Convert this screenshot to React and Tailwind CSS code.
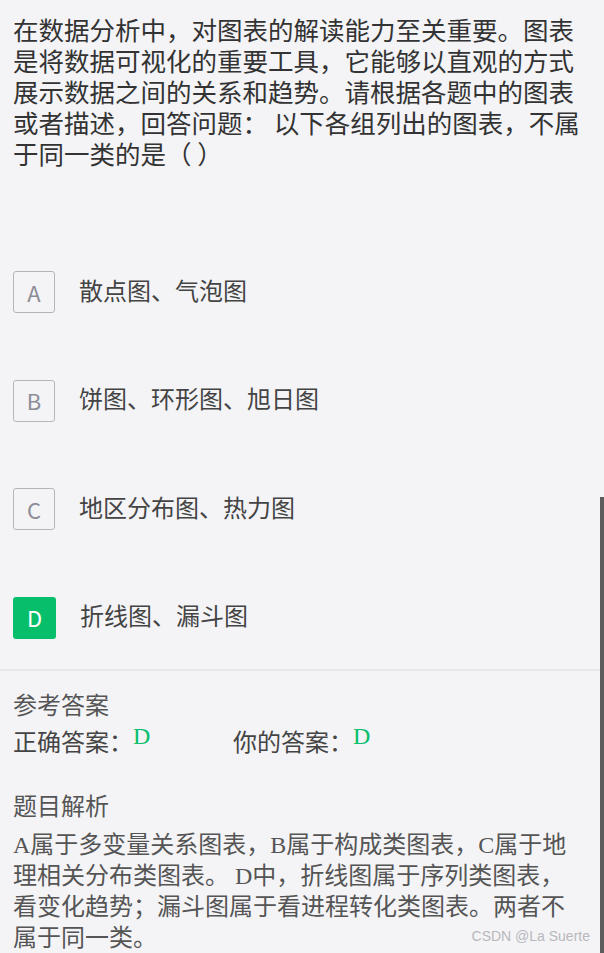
import React from "react";

const options = [
  { key: "A", text: "散点图、气泡图" },
  { key: "B", text: "饼图、环形图、旭日图" },
  { key: "C", text: "地区分布图、热力图" },
  { key: "D", text: "折线图、漏斗图", picked: true },
];

const sans = "font-['Microsoft_YaHei','Noto_Sans_CJK_SC',sans-serif]";

const App = () => {
  return (
    <div className={`relative w-[604px] h-[953px] overflow-hidden bg-[#f4f4f7] ${sans}`}>
      {/* question */}
      <div className="pt-[13px] pl-[13px] w-[583px] text-[25.5px] leading-[31px] text-[#333]">
        在数据分析中，对图表的解读能力至关重要。图表是将数据可视化的重要工具，它能够以直观的方式展示数据之间的关系和趋势。请根据各题中的图表或者描述，回答问题： 以下各组列出的图表，不属于同一类的是（ ）
      </div>

      {/* options */}
      <div className="mt-[103px] flex flex-col gap-[66.5px] pl-[13px]">
        {options.map((o) => (
          <div key={o.key} className="flex items-center h-[42px]">
            {o.picked ? (
              <div className="w-[43px] h-[42px] rounded-[3px] bg-[#07bf6b] text-white flex items-center justify-center text-[22px]">
                {o.key}
              </div>
            ) : (
              <div className="w-[42px] h-[42px] rounded-[3px] border border-[#b4b4bc] text-[#8c8c96] flex items-center justify-center text-[22px]">
                {o.key}
              </div>
            )}
            <div className="ml-[24px] -mt-[5px] text-[24px] text-[#444]">{o.text}</div>
          </div>
        ))}
      </div>

      <div className="mt-[30px] mr-[4px] h-[2px] bg-[#e6e6ec]" />

      {/* answer */}
      <div className="pl-[13px] pt-[17px] text-[24px] leading-[31px]">
        <div className="text-[#555]">参考答案</div>
        <div className="mt-[6px] flex text-[#444]">
          <div className="w-[220px] flex">
            <span>正确答案：</span>
            <span className="font-['Liberation_Serif',serif] text-[#07bf6b] -mt-[4px]">D</span>
          </div>
          <div className="flex">
            <span>你的答案：</span>
            <span className="font-['Liberation_Serif',serif] text-[#07bf6b] -mt-[4px]">D</span>
          </div>
        </div>

        <div className="mt-[33px] text-[#555]">题目解析</div>
        <div className="mt-[10px] w-[570px] leading-[31px] text-[#555] font-['Liberation_Serif','Microsoft_YaHei','Noto_Sans_CJK_SC',serif]">
          A属于多变量关系图表，B属于构成类图表，C属于地理相关分布类图表。 D中，折线图属于序列类图表，看变化趋势；漏斗图属于看进程转化类图表。两者不属于同一类。
        </div>
      </div>

      {/* watermark */}
      <div className="absolute right-[14px] bottom-[6px] text-[14px] text-[#b8b8bc] font-['Liberation_Sans',sans-serif]">
        CSDN @La Suerte
      </div>

      {/* scrollbar */}
      <div className="absolute right-0 top-[497px] w-[4px] h-[456px] bg-[#5c5c5c]" />
    </div>
  );
};

export default App;
